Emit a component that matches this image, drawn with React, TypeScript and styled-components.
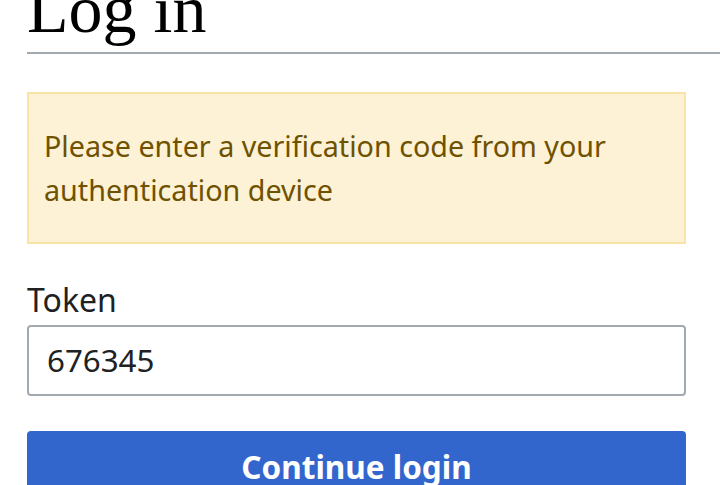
import { styled, createGlobalStyle } from "styled-components";

const GlobalStyle = createGlobalStyle`
  html, body {
    margin: 0;
    padding: 0;
    background: #ffffff;
  }
  body {
    font-family: "Noto Sans", "Open Sans", sans-serif;
    color: #202122;
    overflow: hidden;
  }
`;

const Page = styled.main`
  width: 720px;
  height: 485px;
  overflow: hidden;
  padding-left: 27px;
  box-sizing: border-box;
`;

const Heading = styled.h1`
  margin: -28px 0 0;
  padding: 0 0 5px;
  font-family: "Liberation Serif", "Times New Roman", serif;
  font-weight: 400;
  font-size: 68px;
  line-height: 1.1;
  color: #000000;
  border-bottom: 2px solid #a2a9b1;
`;

const Form = styled.form`
  width: 659px;
  display: flex;
  flex-direction: column;
`;

const Warning = styled.div`
  margin-top: 38px;
  padding: 30px 16px 30px 15px;
  background: #fdf1d6;
  border: 2px solid #f9e4a6;
  color: #6e5200;
  font-size: 28.7px;
  line-height: 44px;
`;

const Field = styled.label`
  margin-top: 36px;
  display: flex;
  flex-direction: column;
  gap: 5px;
  font-size: 32px;
  line-height: 40px;
  color: #202122;
`;

const Input = styled.input`
  height: 71px;
  box-sizing: border-box;
  padding: 0 18px;
  border: 2px solid #a2a9b1;
  border-radius: 4px;
  font-family: inherit;
  font-size: 31.3px;
  color: #202122;
  outline: none;
`;

const Submit = styled.button`
  margin-top: 35px;
  height: 72px;
  flex-shrink: 0;
  border: 0;
  border-radius: 4px;
  background: #3366cc;
  color: #ffffff;
  font-family: inherit;
  font-weight: 700;
  font-size: 31.5px;
  line-height: 72px;
  padding: 0;
  cursor: pointer;
`;

export default function App() {
  return (
    <>
      <GlobalStyle />
      <Page>
        <Heading>Log in</Heading>
        <Form onSubmit={(e) => e.preventDefault()}>
          <Warning>
            Please enter a verification code from your authentication device
          </Warning>
          <Field>
            Token
            <Input defaultValue="676345" />
          </Field>
          <Submit type="submit">Continue login</Submit>
        </Form>
      </Page>
    </>
  );
}
